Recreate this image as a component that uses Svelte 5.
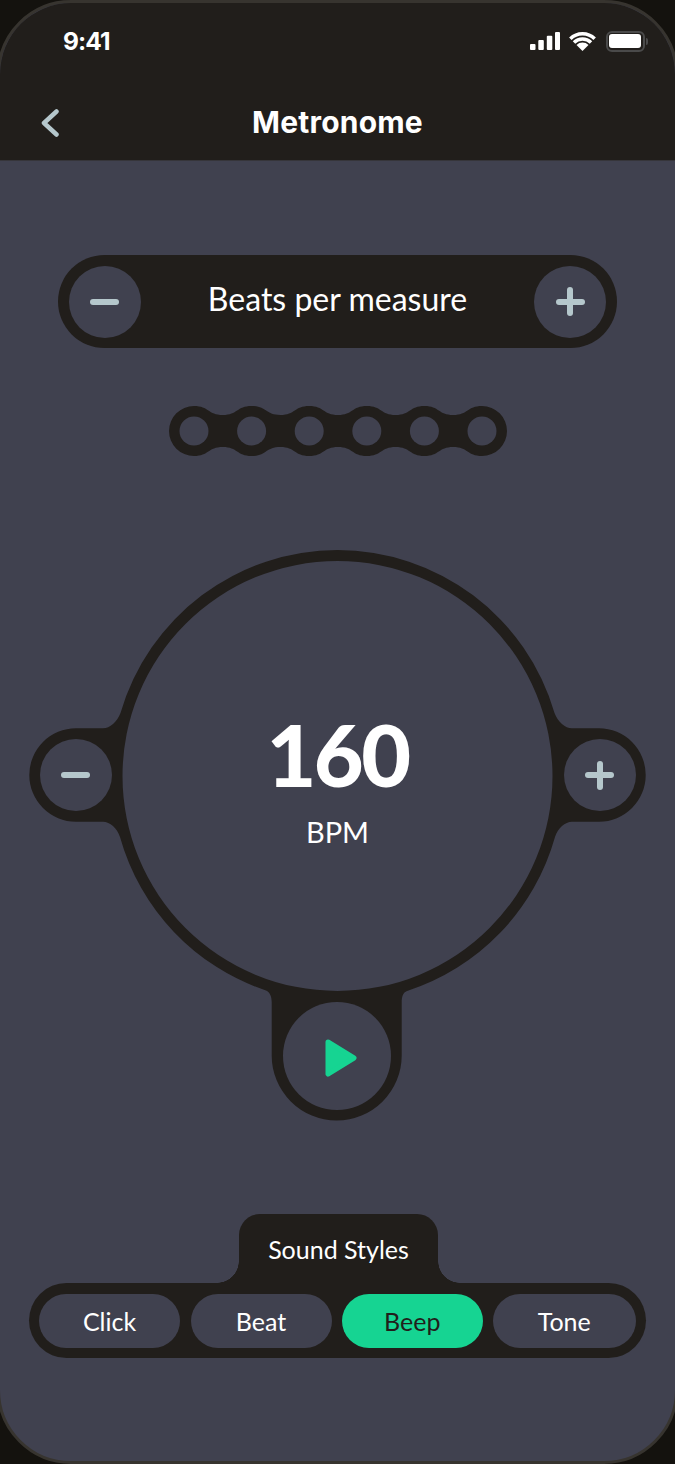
<script>
  const styles = ['Click', 'Beat', 'Beep', 'Tone'];
  const active = 'Beep';
  const dots = [0, 1, 2, 3, 4, 5];

  const r = 25;
  const step = 57.6;
  const depth = 9;
  const pull = 15;

  function wave(y, dip, dir) {
    const order = dir > 0 ? dots.slice(0, 5) : dots.slice(1).reverse();
    return order
      .map((i) => {
        const c = r + i * step;
        const m = c + (dir * step) / 2;
        const n = c + dir * step;
        return (
          `C${c + dir * pull} ${y} ${m - dir * pull} ${dip} ${m} ${dip}` +
          `C${m + dir * pull} ${dip} ${n - dir * pull} ${y} ${n} ${y}`
        );
      })
      .join('');
  }

  const last = r + 5 * step;
  const chainPath =
    `M${r} 0` +
    wave(0, depth, 1) +
    `A${r} ${r} 0 0 1 ${last} 50` +
    wave(50, 50 - depth, -1) +
    `A${r} ${r} 0 0 1 ${r} 0Z`;
</script>

<div class="frame">
  <div class="screen">
    <header class="top">
      <div class="status">
        <span class="time">9:41</span>
        <div class="status-icons">
          <svg viewBox="0 0 30 18" width="30" height="18" aria-hidden="true">
            <rect x="0" y="12" width="5.500" height="6" rx="1" />
            <rect x="8.300" y="8" width="5.500" height="10" rx="1" />
            <rect x="16.800" y="3.700" width="5.500" height="14.300" rx="1" />
            <rect x="25" y="0" width="5" height="18" rx="1" />
          </svg>
          <svg class="wifi" viewBox="0 0 27 19" width="27" height="19" aria-hidden="true">
            <path class="arc" d="M1.340 6.840A17.200 17.200 0 0 1 25.660 6.840" />
            <path class="arc" d="M5 10.500A12 12 0 0 1 22 10.500" />
            <path d="M13.500 19 7.500 13A8.500 8.500 0 0 1 19.500 13Z" />
          </svg>
          <div class="battery"><span class="charge"></span><span class="cap"></span></div>
        </div>
      </div>
      <div class="titlebar">
        <svg class="back" viewBox="0 0 18 28" width="18" height="28" aria-hidden="true">
          <path d="M15.500 2.500 3 14l12.500 11.500" />
        </svg>
        <h1>Metronome</h1>
      </div>
    </header>

    <main class="body">
      <div class="beats">
        <button class="round" aria-label="Fewer beats"><span class="minus"></span></button>
        <span class="beats-label">Beats per measure</span>
        <button class="round" aria-label="More beats"><span class="plus"></span></button>
      </div>

      <svg class="chain" viewBox="0 0 338 50" width="338" height="50" aria-hidden="true">
        <path d={chainPath} />
        {#each dots as d}
          <circle class="hole" cx={r + d * step} cy="25" r="14.500" />
        {/each}
      </svg>

      <div class="dial">
        <svg class="dial-shape" viewBox="0 550 675 571" width="675" height="571" aria-hidden="true">
          <path
            fill-rule="evenodd"
            d="M337.500 550A226 226 0 0 1 554.500 713C558 722 565 728.300 572 728.300L599 728.300A46.700 46.700 0 0 1 599 821.700L572 821.700C565 821.700 558 828 555 837A226 226 0 0 1 406.500 991.200C403 992.500 401.700 997 401.700 1002L401.700 1055.500A65 65 0 0 1 271.700 1055.500L271.700 1002C271.700 997 270 992 266 990.500A226 226 0 0 1 120 837C117 828 110 821.700 103 821.700L76 821.700A46.700 46.700 0 0 1 76 728.300L103 728.300C110 728.300 117 722 120.500 713A226 226 0 0 1 337.500 550ZM337.500 561A215 215 0 1 0 337.500 991A215 215 0 1 0 337.500 561Z"
          />
        </svg>
        <button class="round side left" aria-label="Slower"><span class="minus"></span></button>
        <button class="round side right" aria-label="Faster"><span class="plus"></span></button>
        <div class="readout">
          <span class="bpm-value">160</span>
          <span class="bpm-unit">BPM</span>
        </div>
        <button class="round play" aria-label="Play">
          <svg viewBox="0 0 32 38" width="32" height="38" aria-hidden="true">
            <path d="M3 3 29 19 3 35Z" />
          </svg>
        </button>
      </div>

      <section class="sounds">
        <div class="tab">Sound Styles</div>
        <div class="style-bar">
          {#each styles as s}
            <button class="style" class:on={s === active}>{s}</button>
          {/each}
        </div>
      </section>
    </main>
  </div>
</div>

<style>
  :global(body) {
    margin: 0;
    background: #14120e;
  }

  .frame {
    width: 675px;
    height: 1464px;
    overflow: hidden;
  }

  .screen {
    margin: 0 -3px;
    height: 1464px;
    box-sizing: border-box;
    border: 3px solid #37342f;
    border-radius: 74px;
    overflow: hidden;
    display: flex;
    flex-direction: column;
    font-family: Lato, "Noto Sans", sans-serif;
    color: #fff;
    background: #40414f;
  }

  .top {
    height: 158px;
    flex: none;
    background: #211e1b;
    box-sizing: border-box;
    border-bottom: 1px solid #36353a;
    display: flex;
    flex-direction: column;
  }

  .status {
    display: flex;
    align-items: center;
    justify-content: space-between;
    padding: 0 30.500px 0 63px;
    box-sizing: border-box;
    margin-top: 11px;
    height: 54px;
    flex: none;
  }

  .time {
    font: 700 24.500px Inter, sans-serif;
    letter-spacing: -0.9px;
  }

  .status-icons {
    display: flex;
    align-items: center;
    gap: 9.500px;
  }

  .status-icons svg {
    fill: #fff;
    display: block;
  }

  .wifi .arc {
    fill: none;
    stroke: #fff;
    stroke-width: 3.500;
  }

  .battery {
    position: relative;
    width: 39px;
    height: 21px;
    box-sizing: border-box;
    border: 2px solid #4a4a4a;
    border-radius: 6px;
    padding: 1.500px;
  }

  .charge {
    display: block;
    width: 100%;
    height: 100%;
    background: #fff;
    border-radius: 3px;
  }

  .cap {
    position: absolute;
    right: -5px;
    top: 5px;
    width: 2px;
    height: 7px;
    background: #4a4a4a;
    border-radius: 0 2px 2px 0;
  }

  .titlebar {
    position: relative;
    flex: 1;
    display: flex;
    align-items: center;
    justify-content: center;
    padding-top: 16px;
  }

  .back {
    position: absolute;
    left: 41px;
    top: 41px;
    fill: none;
    stroke: #b5c7cc;
    stroke-width: 4.500;
    stroke-linecap: round;
    stroke-linejoin: round;
  }

  h1 {
    margin: 0;
    font: 700 30px Inter, sans-serif;
    letter-spacing: 0.2px;
  }

  .body {
    flex: 1;
    display: flex;
    flex-direction: column;
    align-items: center;
    min-height: 0;
  }

  .round {
    width: 72px;
    height: 72px;
    border: 0;
    padding: 0;
    border-radius: 50%;
    background: #40414f;
    display: flex;
    align-items: center;
    justify-content: center;
    flex: none;
    position: relative;
  }

  .minus,
  .plus {
    position: relative;
    display: block;
    width: 29px;
    height: 6px;
    border-radius: 3px;
    background: #b5c7cc;
  }

  .plus::after {
    content: '';
    position: absolute;
    left: 11.500px;
    top: -11.500px;
    width: 6px;
    height: 29px;
    border-radius: 3px;
    background: #b5c7cc;
  }

  .beats {
    margin-top: 94px;
    width: 559px;
    height: 93px;
    flex: none;
    box-sizing: border-box;
    padding: 0 10.500px;
    border-radius: 47px;
    background: #211e1b;
    display: flex;
    align-items: center;
    justify-content: space-between;
  }

  .beats-label {
    font-size: 32px;
    line-height: 1;
    padding-bottom: 6px;
  }

  .chain {
    display: block;
    margin-top: 58px;
    fill: #211e1b;
    flex: none;
  }

  .hole {
    fill: #40414f;
  }

  .dial {
    position: relative;
    margin-top: 94px;
    width: 675px;
    height: 571px;
    flex: none;
  }

  .dial-shape {
    display: block;
    fill: #211e1b;
  }

  .side {
    position: absolute;
    top: 189px;
  }

  .side.left {
    left: 39.500px;
  }

  .side.right {
    right: 39.500px;
  }

  .readout {
    position: absolute;
    left: 0;
    right: 0;
    top: 160px;
    display: flex;
    flex-direction: column;
    align-items: center;
  }

  .bpm-value {
    font-size: 86px;
    line-height: 88px;
    font-weight: 900;
    letter-spacing: -2.500px;
  }

  .bpm-unit {
    font-size: 29px;
    line-height: 36px;
    margin-top: 16px;
  }

  .play {
    position: absolute;
    left: 282.500px;
    top: 452px;
    width: 108px;
    height: 108px;
  }

  .play svg {
    fill: #16d492;
    stroke: #16d492;
    stroke-width: 5;
    stroke-linejoin: round;
    margin: 4px 0 0 8px;
  }

  .sounds {
    margin-top: 93px;
    display: flex;
    flex-direction: column;
    align-items: center;
  }

  .tab {
    position: relative;
    left: 1px;
    width: 199px;
    height: 69px;
    padding-top: 18px;
    box-sizing: border-box;
    text-align: center;
    background: #211e1b;
    border-radius: 21px 21px 0 0;
    font-size: 25px;
    line-height: 34px;
  }

  .tab::before,
  .tab::after {
    content: '';
    position: absolute;
    bottom: 0;
    width: 22px;
    height: 22px;
  }

  .tab::before {
    right: 100%;
    background: radial-gradient(circle at 0 0, transparent 21.500px, #211e1b 22px);
  }

  .tab::after {
    left: 100%;
    background: radial-gradient(circle at 100% 0, transparent 21.500px, #211e1b 22px);
  }

  .style-bar {
    width: 617px;
    height: 75px;
    box-sizing: border-box;
    padding: 10.500px 10px;
    border-radius: 38px;
    background: #211e1b;
    display: grid;
    grid-template-columns: 141px 141px 140.500px 142.500px;
    gap: 10.500px;
  }

  .style {
    border: 0;
    padding: 0;
    border-radius: 27px;
    background: #40414f;
    color: #fff;
    font: 400 25px Lato, sans-serif;
  }

  .style.on {
    background: #16d492;
    color: #211e1b;
  }
</style>
